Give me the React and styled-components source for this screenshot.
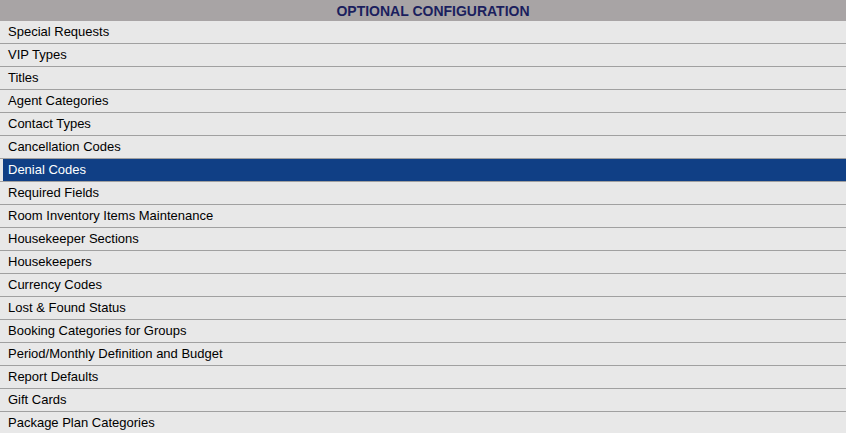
import React, { useState } from 'react';
import styled, { createGlobalStyle } from 'styled-components';

const GlobalStyle = createGlobalStyle`
    body {
        margin: 0;
        background: #e8e8e8;
        font-family: "Liberation Sans", Arial, sans-serif;
    }
`;

const items = [
    'Special Requests',
    'VIP Types',
    'Titles',
    'Agent Categories',
    'Contact Types',
    'Cancellation Codes',
    'Denial Codes',
    'Required Fields',
    'Room Inventory Items Maintenance',
    'Housekeeper Sections',
    'Housekeepers',
    'Currency Codes',
    'Lost & Found Status',
    'Booking Categories for Groups',
    'Period/Monthly Definition and Budget',
    'Report Defaults',
    'Gift Cards',
    'Package Plan Categories',
];

const Panel = styled.div`
    display: flex;
    flex-direction: column;
    width: 100%;
    background: #e8e8e8;
`;

const Header = styled.div`
    height: 21px;
    line-height: 22px;
    padding-left: 20px;
    background: #a8a4a5;
    color: #1b1f5e;
    font-size: 14px;
    font-weight: bold;
    text-align: center;
`;

const Row = styled.div`
    display: flex;
    height: 22px;
    padding-left: 3px;
    border-bottom: 1px solid #a0a0a0;
    cursor: pointer;
`;

const Label = styled.div`
    flex: 1;
    line-height: 22px;
    padding-left: 5px;
    font-size: 13px;
    color: ${p => p.selected ? '#fff' : '#000'};
    background: ${p => p.selected ? '#103f85' : 'transparent'};
`;

const App = () => {
    const [selected, setSelected] = useState('Denial Codes');

    return (
        <>
            <GlobalStyle />
            <Panel>
                <Header>OPTIONAL CONFIGURATION</Header>
                {items.map(item => (
                    <Row key={item} onClick={() => setSelected(item)}>
                        <Label selected={item === selected}>{item}</Label>
                    </Row>
                ))}
            </Panel>
        </>
    );
};

export default App;
